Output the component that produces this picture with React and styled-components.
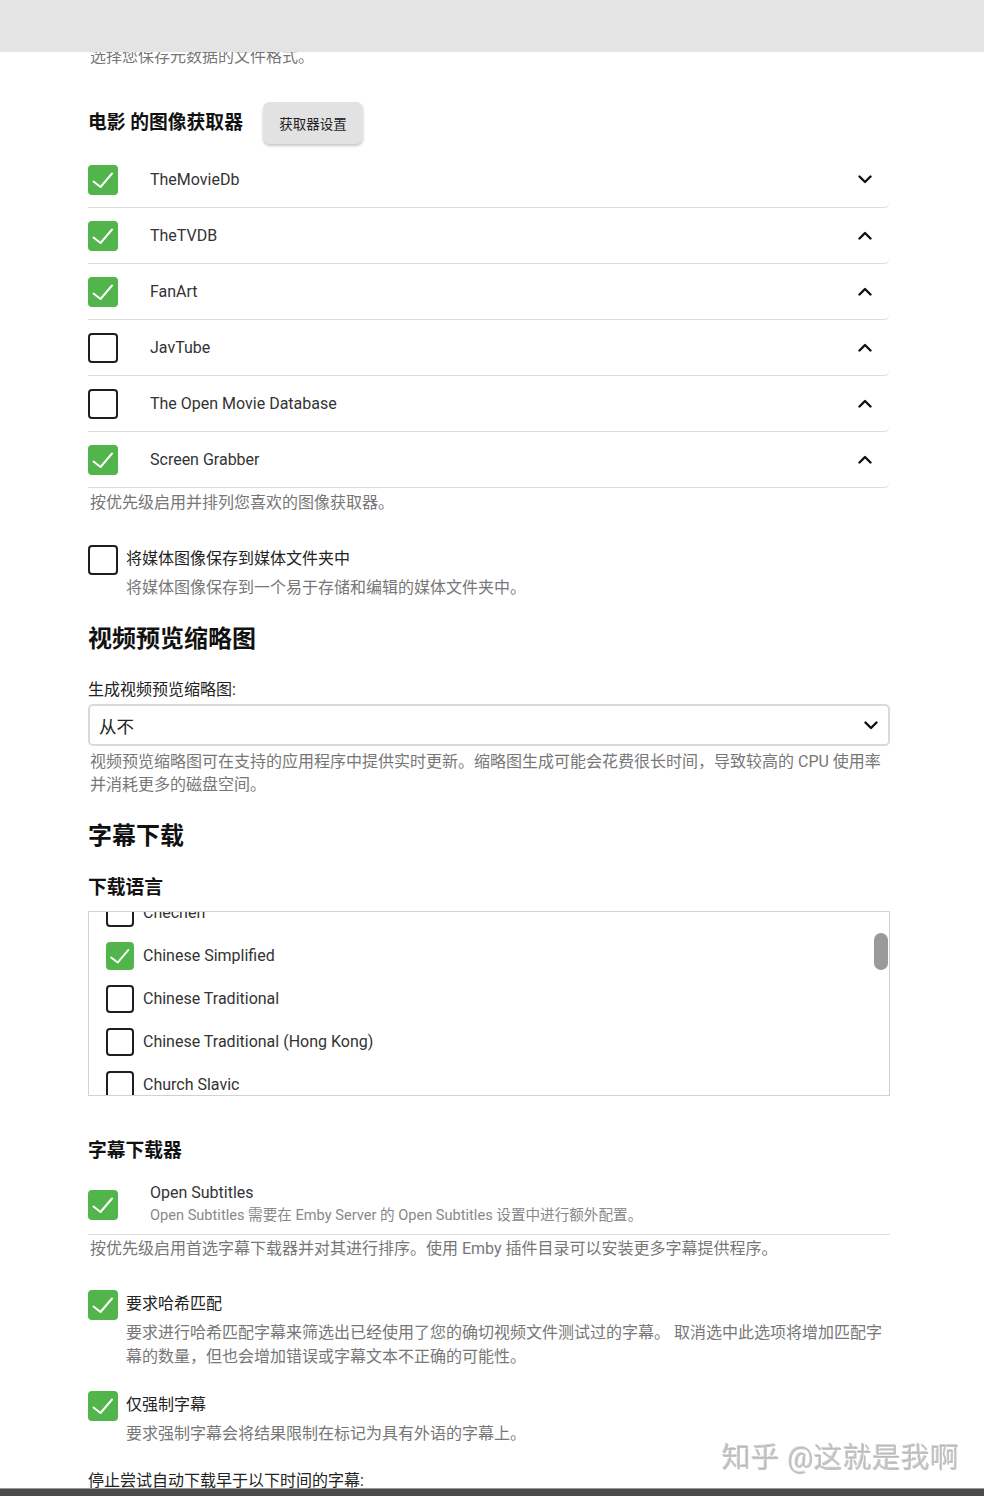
import React from "react";
import styled, { createGlobalStyle } from "styled-components";

const GlobalStyle = createGlobalStyle`
  html, body {
    margin: 0;
    padding: 0;
    background: #fff;
  }
  body {
    font-family: Roboto, "Noto Sans CJK SC", sans-serif;
    color: #222;
  }
`;

const TopBar = styled.div`
  position: fixed;
  top: 0;
  left: 0;
  right: 0;
  height: 52px;
  background: #e4e4e4;
  z-index: 10;
`;

const BottomBar = styled.div`
  position: fixed;
  left: 0;
  right: 0;
  bottom: 0;
  height: 7px;
  background: #4b4b4b;
  border-top: 1px solid #9a9a9a;
  z-index: 10;
`;

const Watermark = styled.div`
  position: fixed;
  left: 722px;
  top: 1438px;
  font-size: 28.8px;
  line-height: 40px;
  color: rgba(175, 175, 175, 0.72);
  text-shadow: 1px 1px 0 #fff, -1px -1px 0 rgba(120, 120, 120, 0.3);
  letter-spacing: 0.3px;
  z-index: 11;
`;

const Page = styled.main`
  width: 802px;
  margin-left: 88px;
  padding-top: 46px;
  padding-bottom: 40px;
`;

const Help = styled.div`
  margin-top: ${(p) => p.$mt || 0}px;
  padding-left: 2px;
  font-size: 16px;
  line-height: ${(p) => p.$lh || 22}px;
  color: #777;
`;

const TitleRow = styled.div`
  display: flex;
  align-items: center;
  gap: 20px;
  margin-top: 34px;
`;

const GroupTitle = styled.h3`
  margin: ${(p) => p.$mt || 0}px 0 0;
  font-size: 18.8px;
  line-height: 26px;
  font-weight: 700;
  color: #111;
`;

const SectionTitle = styled.h2`
  margin: ${(p) => p.$mt || 0}px 0 0;
  font-size: 24px;
  line-height: 30px;
  font-weight: 700;
  color: #111;
`;

const SettingsButton = styled.button`
  height: 42px;
  width: 100px;
  border: none;
  border-radius: 7px;
  background: #e2e2e2;
  box-shadow: 0 2px 3px rgba(0, 0, 0, 0.22);
  font-family: inherit;
  font-size: 13.5px;
  color: #222;
  padding: 0;
`;

const FetcherList = styled.div`
  margin-top: 8px;
`;

const FetcherRow = styled.div`
  display: flex;
  align-items: center;
  height: 55px;
  border-bottom: 1px solid #dcdcdc;
  border-radius: 0 0 6px 0;
  padding-right: 18px;
`;

const RowName = styled.span`
  flex: 1;
  margin-left: 32px;
  font-size: 16px;
  color: #333;
`;

const Box = styled.span`
  flex: none;
  display: inline-flex;
  align-items: center;
  justify-content: center;
  box-sizing: border-box;
  width: ${(p) => p.$size}px;
  height: ${(p) => p.$size}px;
  border-radius: 4px;
  background: ${(p) => (p.$on ? "#52b54b" : "#fff")};
  border: ${(p) => (p.$on ? "none" : "2px solid #1e1e1e")};
`;

function Checkbox({ on, size = 30 }) {
  return (
    <Box $on={on} $size={size}>
      {on && (
        <svg width={size} height={size} viewBox="0 0 30 30">
          <polyline
            points="5.5,16.5 12.5,22 24,8.5"
            fill="none"
            stroke="#fff"
            strokeWidth="2"
            strokeLinecap="round"
            strokeLinejoin="round"
          />
        </svg>
      )}
    </Box>
  );
}

function Chevron({ up }) {
  return (
    <svg width="14" height="9" viewBox="0 0 14 9">
      <polyline
        points={up ? "1.5,7.5 7,2 12.5,7.5" : "1.5,1.5 7,7 12.5,1.5"}
        fill="none"
        stroke="#111"
        strokeWidth="2.4"
        strokeLinecap="round"
        strokeLinejoin="round"
      />
    </svg>
  );
}

const CheckField = styled.div`
  display: flex;
  align-items: flex-start;
  margin-top: ${(p) => p.$mt || 0}px;
`;

const CheckText = styled.div`
  margin-left: 8px;
`;

const CheckLabel = styled.div`
  font-size: 16px;
  line-height: 28px;
  color: #222;
`;

const CheckDesc = styled.div`
  margin-top: ${(p) => p.$mt || 3}px;
  font-size: 16px;
  line-height: 24px;
  color: #777;
`;

const FieldLabel = styled.div`
  margin-top: ${(p) => p.$mt || 0}px;
  font-size: 16px;
  line-height: 22px;
  color: #222;
`;

const SelectBox = styled.div`
  display: flex;
  align-items: center;
  justify-content: space-between;
  box-sizing: border-box;
  height: 42px;
  margin-top: 3px;
  padding: 0 10px 0 9px;
  border: 2px solid #dadada;
  border-radius: 5px;
  font-size: 17.5px;
  color: #222;
`;

const LangBox = styled.div`
  position: relative;
  box-sizing: border-box;
  height: 185px;
  margin-top: 10px;
  border: 1px solid #d2d2d2;
  overflow: hidden;
`;

const LangList = styled.div`
  margin-top: -21px;
  padding-left: 17px;
`;

const LangItem = styled.div`
  display: flex;
  align-items: center;
  gap: 9px;
  height: 43px;
  font-size: 16px;
  color: #333;
`;

const ScrollThumb = styled.div`
  position: absolute;
  top: 21px;
  right: 1px;
  width: 14px;
  height: 37px;
  border-radius: 7px;
  background: #9a9a9a;
`;

const SubRow = styled.div`
  display: flex;
  align-items: center;
  margin-top: 10px;
  padding: 8px 0 7px;
  border-bottom: 1px solid #dcdcdc;
`;

const SubText = styled.div`
  margin-left: 32px;
`;

const SubName = styled.div`
  font-size: 16px;
  line-height: 22px;
  color: #333;
`;

const SubDesc = styled.div`
  font-size: 14.6px;
  line-height: 23px;
  color: #888;
`;

const fetchers = [
  { name: "TheMovieDb", on: true, up: false },
  { name: "TheTVDB", on: true, up: true },
  { name: "FanArt", on: true, up: true },
  { name: "JavTube", on: false, up: true },
  { name: "The Open Movie Database", on: false, up: true },
  { name: "Screen Grabber", on: true, up: true },
];

const languages = [
  { name: "Chechen", on: false },
  { name: "Chinese Simplified", on: true },
  { name: "Chinese Traditional", on: false },
  { name: "Chinese Traditional (Hong Kong)", on: false },
  { name: "Church Slavic", on: false },
];

export default function App() {
  return (
    <>
      <GlobalStyle />
      <TopBar />
      <Page>
        <Help>选择您保存元数据的文件格式。</Help>

        <TitleRow>
          <GroupTitle>电影 的图像获取器</GroupTitle>
          <SettingsButton>获取器设置</SettingsButton>
        </TitleRow>

        <FetcherList>
          {fetchers.map((f) => (
            <FetcherRow key={f.name}>
              <Checkbox on={f.on} />
              <RowName>{f.name}</RowName>
              <Chevron up={f.up} />
            </FetcherRow>
          ))}
        </FetcherList>
        <Help $mt={4}>按优先级启用并排列您喜欢的图像获取器。</Help>

        <CheckField $mt={31}>
          <Checkbox on={false} />
          <CheckText>
            <CheckLabel>将媒体图像保存到媒体文件夹中</CheckLabel>
            <CheckDesc $mt={3}>将媒体图像保存到一个易于存储和编辑的媒体文件夹中。</CheckDesc>
          </CheckText>
        </CheckField>

        <SectionTitle $mt={24}>视频预览缩略图</SectionTitle>
        <FieldLabel $mt={25}>生成视频预览缩略图:</FieldLabel>
        <SelectBox>
          <span>从不</span>
          <Chevron />
        </SelectBox>
        <Help $mt={4} $lh={23}>
          视频预览缩略图可在支持的应用程序中提供实时更新。缩略图生成可能会花费很长时间，导致较高的 CPU 使用率并消耗更多的磁盘空间。
        </Help>

        <SectionTitle $mt={25}>字幕下载</SectionTitle>
        <GroupTitle $mt={24}>下载语言</GroupTitle>
        <LangBox>
          <LangList>
            {languages.map((l) => (
              <LangItem key={l.name}>
                <Checkbox on={l.on} size={28} />
                <span>{l.name}</span>
              </LangItem>
            ))}
          </LangList>
          <ScrollThumb />
        </LangBox>

        <GroupTitle $mt={42}>字幕下载器</GroupTitle>
        <SubRow>
          <Checkbox on />
          <SubText>
            <SubName>Open Subtitles</SubName>
            <SubDesc>Open Subtitles 需要在 Emby Server 的 Open Subtitles 设置中进行额外配置。</SubDesc>
          </SubText>
        </SubRow>
        <Help $mt={3}>按优先级启用首选字幕下载器并对其进行排序。使用 Emby 插件目录可以安装更多字幕提供程序。</Help>

        <CheckField $mt={30}>
          <Checkbox on />
          <CheckText>
            <CheckLabel>要求哈希匹配</CheckLabel>
            <CheckDesc>
              要求进行哈希匹配字幕来筛选出已经使用了您的确切视频文件测试过的字幕。 取消选中此选项将增加匹配字幕的数量，但也会增加错误或字幕文本不正确的可能性。
            </CheckDesc>
          </CheckText>
        </CheckField>

        <CheckField $mt={22}>
          <Checkbox on />
          <CheckText>
            <CheckLabel>仅强制字幕</CheckLabel>
            <CheckDesc>要求强制字幕会将结果限制在标记为具有外语的字幕上。</CheckDesc>
          </CheckText>
        </CheckField>

        <FieldLabel $mt={24}>停止尝试自动下载早于以下时间的字幕:</FieldLabel>
      </Page>
      <Watermark>知乎 @这就是我啊</Watermark>
      <BottomBar />
    </>
  );
}
